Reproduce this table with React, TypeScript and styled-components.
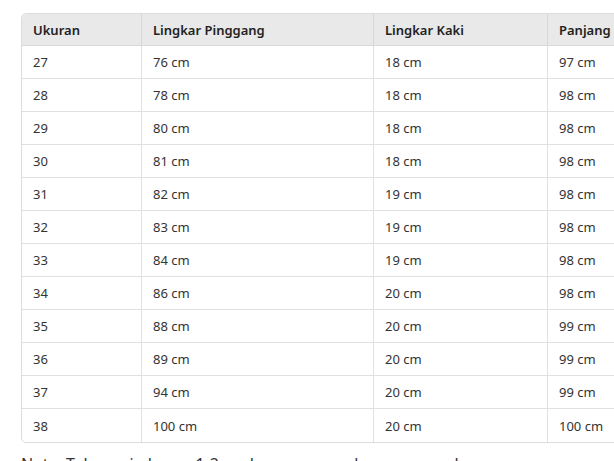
import React from "react";
import styled, { createGlobalStyle } from "styled-components";

const Global = createGlobalStyle`
  html, body { margin: 0; padding: 0; background: #ffffff; overflow: hidden; }
  body { font-family: "Noto Sans", "Open Sans", sans-serif; color: #333; }
`;

const Page = styled.div`
  padding: 13px 0 0 21px;
  width: 760px;
`;

const TableWrap = styled.div`
  border: 1px solid #dcdcdc;
  border-radius: 5px;
  overflow: hidden;
  width: 720px;
`;

const Table = styled.table`
  border-collapse: separate;
  border-spacing: 0;
  table-layout: fixed;
  width: 720px;
`;

const Th = styled.th`
  background: #e9e9e9;
  text-align: left;
  font-weight: 600;
  font-size: 13px;
  color: #222;
  height: 32px;
  padding: 0 11px;
  box-sizing: border-box;
  border-right: 1px solid #d8d8d8;
  border-bottom: 1px solid #d8d8d8;
  white-space: nowrap;
`;

const Td = styled.td<{ $last?: boolean }>`
  font-size: 13px;
  color: #333;
  height: 33px;
  padding: 0 11px;
  box-sizing: border-box;
  border-right: 1px solid #e0e0e0;
  border-bottom: ${(p) => (p.$last ? "none" : "1px solid #e0e0e0")};
  white-space: nowrap;
`;

const Note = styled.p`
  margin: 10px 0 0 0;
  font-size: 16px;
  line-height: 22px;
  color: #333;
  white-space: nowrap;
`;

const rows: [string, string, string, string][] = [
  ["27", "76 cm", "18 cm", "97 cm"],
  ["28", "78 cm", "18 cm", "98 cm"],
  ["29", "80 cm", "18 cm", "98 cm"],
  ["30", "81 cm", "18 cm", "98 cm"],
  ["31", "82 cm", "19 cm", "98 cm"],
  ["32", "83 cm", "19 cm", "98 cm"],
  ["33", "84 cm", "19 cm", "98 cm"],
  ["34", "86 cm", "20 cm", "98 cm"],
  ["35", "88 cm", "20 cm", "99 cm"],
  ["36", "89 cm", "20 cm", "99 cm"],
  ["37", "94 cm", "20 cm", "99 cm"],
  ["38", "100 cm", "20 cm", "100 cm"],
];

export default function App() {
  return (
    <Page>
      <Global />
      <TableWrap>
        <Table>
          <colgroup>
            <col style={{ width: 120 }} />
            <col style={{ width: 232 }} />
            <col style={{ width: 174 }} />
            <col style={{ width: 194 }} />
          </colgroup>
          <thead>
            <tr>
              <Th>Ukuran</Th>
              <Th>Lingkar Pinggang</Th>
              <Th>Lingkar Kaki</Th>
              <Th>Panjang</Th>
            </tr>
          </thead>
          <tbody>
            {rows.map((r, i) => (
              <tr key={r[0]}>
                {r.map((c, j) => (
                  <Td key={j} $last={i === rows.length - 1}>
                    {c}
                  </Td>
                ))}
              </tr>
            ))}
          </tbody>
        </Table>
      </TableWrap>
      <Note>Note: Toleransi ukuran 1-2 cm karena pengukuran manual.</Note>
    </Page>
  );
}
